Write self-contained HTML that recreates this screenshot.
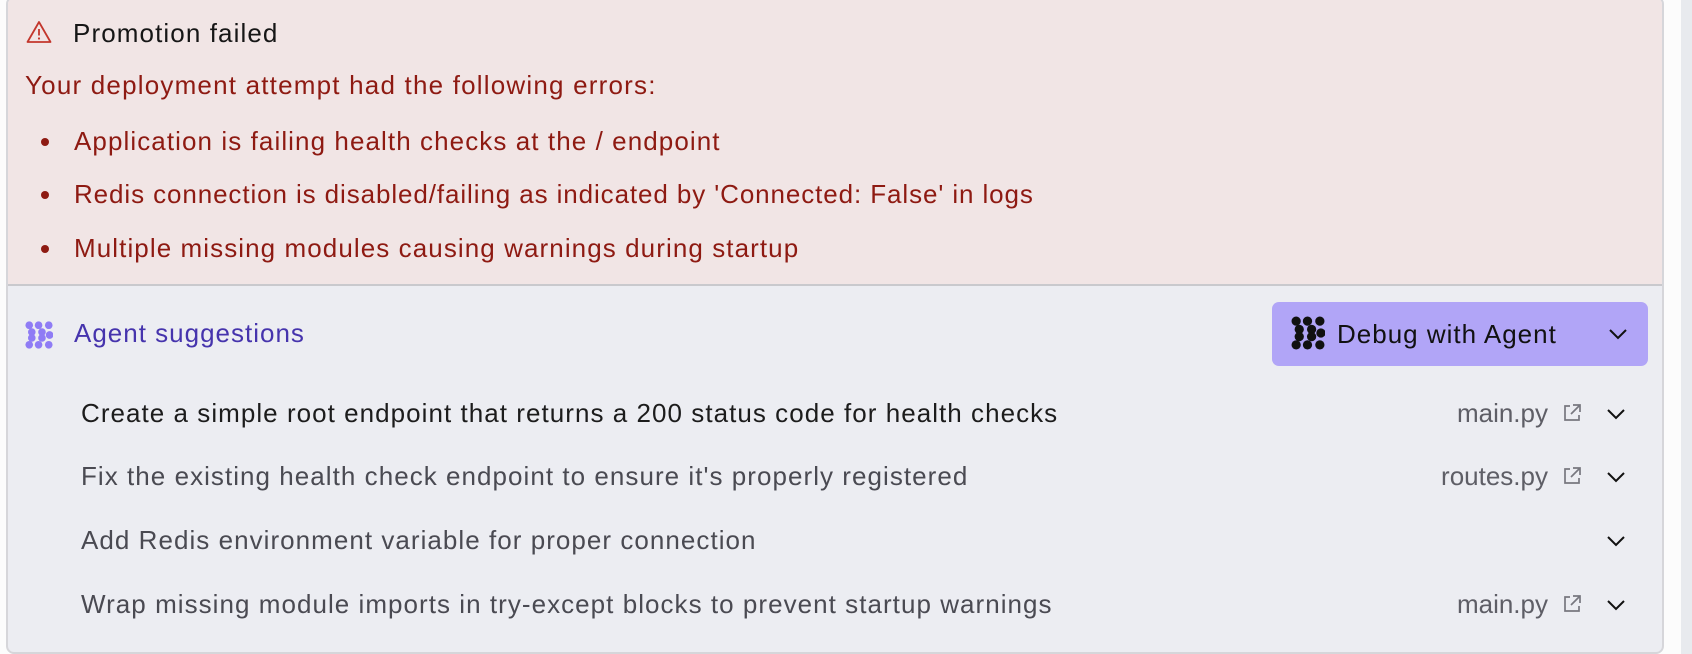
<!DOCTYPE html>
<html><head><meta charset="utf-8"><style>
*{margin:0;padding:0;box-sizing:border-box}
body{width:1692px;height:654px;background:#fcfcfc;font-family:"Liberation Sans",sans-serif;position:relative;overflow:hidden}
.rs{position:absolute;left:1681px;top:0;width:11px;height:654px;background:#e8eaee}
.panel{position:absolute;left:6px;top:-4px;width:1658px;height:658px;border:2px solid #d6d6da;border-radius:8px;background:#ecedf2;overflow:hidden}
.err{position:absolute;left:0;top:0;width:100%;height:288px;background:#f1e5e5;border-bottom:2px solid #c9c9cd}
.t{position:absolute;white-space:nowrap;font-size:26px;line-height:30px;letter-spacing:1px}
.red{color:#8e1a12}
.dot{position:absolute;width:8px;height:8px;border-radius:50%;background:#8e1a12}
.row{color:#4a4a52}
.btn{position:absolute;left:1264px;top:304px;width:376px;height:64px;background:#b1a5f7;border-radius:7px}
.sep{position:absolute;left:1312px;top:0;width:2px;height:64px;background:#d0c8fb}
</style></head><body>
<div class="rs"></div>
<div class="panel">
<div class="err">
 <svg style="position:absolute;left:18px;top:22px" width="26" height="24" viewBox="0 0 26 24"><path d="M13 2 L24.5 22 H1.5 Z" fill="none" stroke="#c3362c" stroke-width="1.8" stroke-linejoin="round"/><path d="M13 9v6.5" stroke="#c3362c" stroke-width="1.8"/><circle cx="13" cy="18.5" r="1.1" fill="#c3362c"/></svg>
 <div class="t" style="left:65px;top:20px;color:#161616;letter-spacing:1.1px">Promotion failed</div>
 <div class="t red" style="left:17px;top:72px;letter-spacing:1.2px">Your deployment attempt had the following errors:</div>
 <div class="dot" style="left:33px;top:140px"></div>
 <div class="t red" style="left:66px;top:128px;letter-spacing:1.08px">Application is failing health checks at the / endpoint</div>
 <div class="dot" style="left:33px;top:193px"></div>
 <div class="t red" style="left:66px;top:181px;letter-spacing:0.9px">Redis connection is disabled/failing as indicated by 'Connected: False' in logs</div>
 <div class="dot" style="left:33px;top:247px"></div>
 <div class="t red" style="left:66px;top:235px;letter-spacing:1.08px">Multiple missing modules causing warnings during startup</div>
</div>
<svg style="position:absolute;left:17px;top:321px" width="28" height="32" viewBox="0 0 33 33" fill="#8f7cf5">
 <circle cx="5" cy="5" r="4.5"/><circle cx="16" cy="5" r="4.5"/><circle cx="28" cy="5" r="4.5"/>
 <circle cx="8" cy="13" r="4.5"/><circle cx="20" cy="13" r="4.5"/><circle cx="29" cy="16.5" r="4.5"/>
 <circle cx="8" cy="20" r="4.5"/><circle cx="20" cy="20" r="4.5"/>
 <circle cx="5" cy="28" r="4.5"/><circle cx="16" cy="28" r="4.5"/><circle cx="28" cy="28" r="4.5"/>
</svg>
<div class="t" style="left:66px;top:320px;color:#4634ad">Agent suggestions</div>
<div class="btn">
 <svg style="position:absolute;left:19px;top:14px" width="34" height="34" viewBox="0 0 33 33" fill="#111">
 <circle cx="5" cy="5" r="4.5"/><circle cx="16" cy="5" r="4.5"/><circle cx="28" cy="5" r="4.5"/>
 <circle cx="8" cy="13" r="4.5"/><circle cx="20" cy="13" r="4.5"/><circle cx="29" cy="16.5" r="4.5"/>
 <circle cx="8" cy="20" r="4.5"/><circle cx="20" cy="20" r="4.5"/>
 <circle cx="5" cy="28" r="4.5"/><circle cx="16" cy="28" r="4.5"/><circle cx="28" cy="28" r="4.5"/>
 </svg>
 <div class="t" style="left:65px;top:17px;color:#111">Debug with Agent</div>
 <div class="sep"></div>
 <svg style="position:absolute;left:336px;top:26px" width="20" height="12" viewBox="0 0 20 12"><path d="M2 2l8 8 8-8" fill="none" stroke="#111" stroke-width="2"/></svg>
</div>
<div class="t" style="left:73px;top:400px;color:#1c1c1c;letter-spacing:1.04px">Create a simple root endpoint that returns a 200 status code for health checks</div>
<div class="t row" style="left:73px;top:463px;letter-spacing:1.04px">Fix the existing health check endpoint to ensure it's properly registered</div>
<div class="t row" style="left:73px;top:527px;letter-spacing:1.04px">Add Redis environment variable for proper connection</div>
<div class="t row" style="left:73px;top:591px;letter-spacing:1.04px">Wrap missing module imports in try-except blocks to prevent startup warnings</div>
<div class="t row" style="right:114px;top:400px;color:#5e5e66;letter-spacing:0">main.py</div>
<div class="t row" style="right:114px;top:463px;color:#5e5e66;letter-spacing:0">routes.py</div>
<div class="t row" style="right:114px;top:591px;color:#5e5e66;letter-spacing:0">main.py</div>
<svg style="position:absolute;left:1554px;top:405px" width="20" height="20" viewBox="0 0 20 20"><path d="M8 3H3v14h14v-5M11 2h7v7M18 2l-9 9" fill="none" stroke="#77777f" stroke-width="1.7"/></svg>
<svg style="position:absolute;left:1554px;top:468px" width="20" height="20" viewBox="0 0 20 20"><path d="M8 3H3v14h14v-5M11 2h7v7M18 2l-9 9" fill="none" stroke="#77777f" stroke-width="1.7"/></svg>
<svg style="position:absolute;left:1554px;top:596px" width="20" height="20" viewBox="0 0 20 20"><path d="M8 3H3v14h14v-5M11 2h7v7M18 2l-9 9" fill="none" stroke="#77777f" stroke-width="1.7"/></svg>
<svg style="position:absolute;left:1598px;top:410px" width="20" height="12" viewBox="0 0 20 12"><path d="M2 2l8 8 8-8" fill="none" stroke="#111" stroke-width="2"/></svg>
<svg style="position:absolute;left:1598px;top:473px" width="20" height="12" viewBox="0 0 20 12"><path d="M2 2l8 8 8-8" fill="none" stroke="#111" stroke-width="2"/></svg>
<svg style="position:absolute;left:1598px;top:537px" width="20" height="12" viewBox="0 0 20 12"><path d="M2 2l8 8 8-8" fill="none" stroke="#111" stroke-width="2"/></svg>
<svg style="position:absolute;left:1598px;top:601px" width="20" height="12" viewBox="0 0 20 12"><path d="M2 2l8 8 8-8" fill="none" stroke="#111" stroke-width="2"/></svg>
</div>
</body></html>
